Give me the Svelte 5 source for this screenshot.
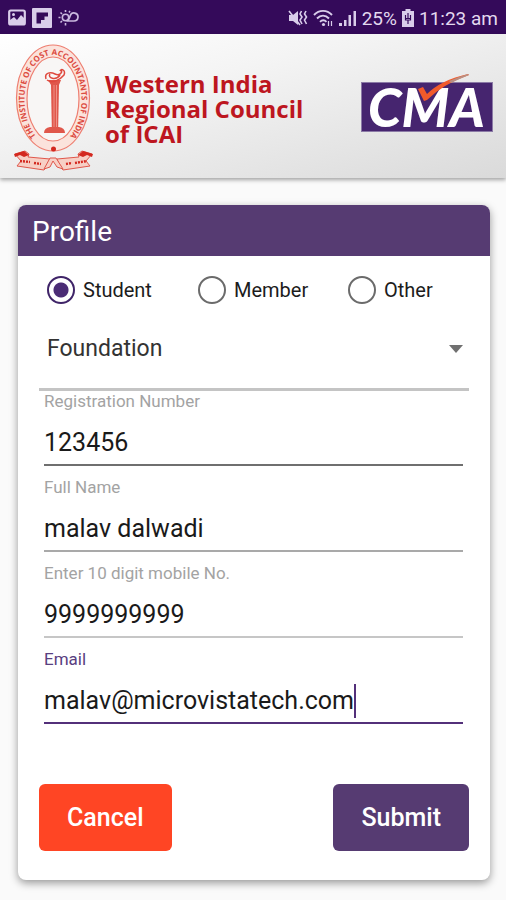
<script>
  let role = $state('Student');
  let level = $state('Foundation');
  const roles = ['Student', 'Member', 'Other'];
  const levels = ['Foundation', 'Intermediate', 'Final'];

  let fields = $state([
    { id: 'reg', label: 'Registration Number', type: 'text', value: '123456', tone: 'dark' },
    { id: 'name', label: 'Full Name', type: 'text', value: 'malav dalwadi', tone: 'mid' },
    { id: 'mobile', label: 'Enter 10 digit mobile No.', type: 'tel', value: '9999999999', tone: 'light' },
    { id: 'email', label: 'Email', type: 'text', value: 'malav@microvistatech.com', tone: 'active' }
  ]);
</script>

<div class="screen">
  <div class="status">
    <div class="group left">
      <svg width="18" height="18" viewBox="0 0 18 18" aria-hidden="true">
        <rect x="1.2" y="1.5" width="15.6" height="14" rx="1.5" fill="none" stroke="#d9cdea" stroke-width="2.2" />
        <path d="M2 13V11l4-3 3 3 4-5 4 4v5H2z" fill="#d9cdea" />
        <circle cx="5.5" cy="5.5" r="1.5" fill="#d9cdea" />
      </svg>
      <svg width="20" height="20" viewBox="0 0 20 20" aria-hidden="true">
        <rect width="20" height="20" rx="1" fill="#d9cdea" />
        <path d="M4.5 4.500H16V8.500H12.500V12H9V15.500H4.500z" fill="#340a5a" />
      </svg>
      <svg width="21" height="18" viewBox="0 0 21 18" fill="none" stroke="#c9b9de" aria-hidden="true">
        <circle cx="7.500" cy="8.500" r="3.200" stroke-width="1.600" />
        <path d="M7.500 1v2M2.500 3.500l1.500 1.500M.5 8.500h2M2.500 13.500L4 12M7.500 14v2.500M11 3.500l1-1.500" stroke-width="1.600" />
        <path d="M8.500 12h7.500a4 4 0 1 0-3.800-5.300C11.500 9 10 11.800 8.500 12z" stroke-width="1.700" />
      </svg>
    </div>
    <div class="group right">
      <svg width="20" height="18" viewBox="0 0 20 18" aria-hidden="true">
        <path d="M1 6h4l5-4v14l-5-4H1z" fill="#d9cdea" />
        <path d="M1 2l11 14" stroke="#d9cdea" stroke-width="1.600" />
        <path d="M13.500 2l-1.500 3 2 3-2 3 2 4M18 2l-1.500 3 2 3-2 3 2 4" fill="none" stroke="#d9cdea" stroke-width="1.600" />
      </svg>
      <svg width="21" height="18" viewBox="0 0 21 18" fill="none" stroke="#d9cdea" stroke-width="1.900" aria-hidden="true">
        <path d="M1 6C6 .5 14 .5 19 6M4 9.500c3.500-3.800 8.500-3.800 12 0M7 12.800c2-2 4.500-2 6.500 0" />
        <circle cx="10.500" cy="15.500" r="1.600" fill="#d9cdea" stroke="none" />
        <path d="M15.500 12v5M18.500 12v5" stroke-width="1.200" />
      </svg>
      <svg width="18" height="18" viewBox="0 0 18 18" fill="#d9cdea" aria-hidden="true">
        <path d="M0 14h3v3H0zM5 11h2.500v6H5zM9.500 6H12v11H9.500zM14.500 2H17v15h-2.500z" />
      </svg>
      <span>25%</span>
      <svg width="12" height="18" viewBox="0 0 12 18" aria-hidden="true">
        <path d="M3.500 0h5v2H12v16H0V2h3.500z" fill="#d9cdea" />
        <path d="M6 4v5M3 9.500h6M3.500 6v5h5V6M6 11v4" fill="none" stroke="#340a5a" stroke-width="1.200" />
      </svg>
      <span>11:23 am</span>
    </div>
  </div>

  <header>
    <svg class="seal" width="86" height="132" viewBox="11 43 86 132" role="img" aria-label="Institute seal">
      <ellipse cx="53" cy="99" rx="36.500" ry="53" fill="#fbe3dc" stroke="#ee7e70" stroke-width="1.200" />
      <ellipse cx="53" cy="100" rx="26" ry="42" fill="#f8f6f5" stroke="#ee7e70" stroke-width="1.200" />
      <path id="ring" d="M36 137A28.500 45 0 1 1 70 137" fill="none" />
      <text class="ringtext"><textPath href="#ring" startOffset="50%" text-anchor="middle">THE INSTITUTE OF COST ACCOUNTANTS OF INDIA</textPath></text>
      <g fill="#e0574b">
        <path d="M51 86h8l-.8 42h-6.400z" />
        <path d="M44 134q0-5 6-6h9q6 1 6 6z" />
        <path d="M48 81h13l-2 5h-8z" />
        <circle cx="53.500" cy="150" r="2.500" fill="#d3281f" />
      </g>
      <path d="M54 86v42M56.500 86v42" stroke="#f2a095" stroke-width=".8" />
      <path d="M46 80c-2-7 5-7 9-5s8-1 6-4M47 81c5 4 13 0 17-5 2-5-3-7-4-4M50 75c-3 4 6 7 10 1" fill="none" stroke="#df493e" stroke-width="1.500" />
      <g fill="#f7cfc5" stroke="#e0574b" stroke-width="1">
        <path d="M15 155l10-3 4 3-1 3 22 2-3 7-3 4-27-4 4-5z" />
        <path d="M92 155l-10-3-4 3 1 3-22 2 3 7 3 4 27-4-4-5z" />
        <path d="M50 159l-6 11 6-2 3-6 4 6 6 2-7-11z" />
      </g>
      <path d="M14 155l10-3 5 4-5 2-4-2-5 2zM93 155l-10-3-5 4 5 2 4-2 5 2z" fill="#d3281f" />
      <path d="M20 162l10 1M34 164l7 1M66 165l6-1M75 164l12-2" stroke="#d3281f" stroke-width="2.400" stroke-dasharray="2 1" />
    </svg>
    <h1>Western India<br />Regional Council<br />of ICAI</h1>
    <svg class="cma" width="132" height="62" viewBox="0 0 132 62" role="img" aria-label="CMA">
      <rect x=".5" y="9.500" width="131" height="49" fill="#46256f" stroke="#8b7aa6" />
      <text x="7" y="54">CMA</text>
      <path d="M57 16l5-2 4 7Q80 7 107 1l1 1Q82 11 66 27l-3 1z" fill="#f15a2b" />
      <path d="M88 8q9-4 19-7l1 1q-10 4-18 8z" fill="#b98f83" />
    </svg>
  </header>

  <main>
    <form class="card" onsubmit={(e) => e.preventDefault()}>
      <h2>Profile</h2>
      <div class="body">
        <div class="roles" role="radiogroup" aria-label="Profile type">
          {#each roles as r}
            <label><input type="radio" name="role" value={r} bind:group={role} />{r}</label>
          {/each}
        </div>
        <div class="picker">
          <select aria-label="Level" bind:value={level}>
            {#each levels as l}<option>{l}</option>{/each}
          </select>
          <svg width="14" height="8" viewBox="0 0 14 8" aria-hidden="true"><path d="M0 0h14L7 8z" fill="#707070" /></svg>
        </div>
        <div class="fields">
          {#each fields as f}
            <div class="field {f.tone}">
              <label for={f.id}>{f.label}</label>
              <div class="line">
                <input id={f.id} type={f.type} bind:value={f.value} />
                {#if f.tone === 'active'}<span class="caret"></span>{/if}
              </div>
            </div>
          {/each}
        </div>
        <div class="actions">
          <button type="button" class="cancel">Cancel</button>
          <button type="submit" class="submit">Submit</button>
        </div>
      </div>
    </form>
  </main>
</div>

<style>
  :global(body) { margin: 0; background: #fafafa; }
  .screen { min-height: 100vh; background: #fafafa; font-family: Roboto, "Noto Sans", sans-serif; color: #1c1c1c; }
  .screen * { box-sizing: border-box; }
  .status { height: 34px; padding: 2px 8px 0; display: flex; justify-content: space-between; align-items: center; background: #340a5a; color: #e3d9ef; font-size: 19px; }
  .group { display: flex; align-items: center; }
  .left { gap: 6px; }
  .right { gap: 5px; }
  header { height: 144px; padding: 4px 13px 0 11px; display: flex; align-items: center; background: linear-gradient(165deg, #fff 0%, #f4f4f4 35%, #dadada 100%); box-shadow: 0 2px 4px rgba(0, 0, 0, .35); }
  .seal { flex: none; }
  .ringtext { font: 700 8px "Open Sans", sans-serif; fill: #dc4a40; }
  h1 { margin: 0 0 0 8px; flex: 1; font: 700 24px/25px "Open Sans", "Noto Sans", sans-serif; color: #bd1620; white-space: nowrap; }
  .cma { flex: none; margin-bottom: 8px; overflow: visible; }
  .cma text { font: italic 900 54px Lato, sans-serif; fill: #fff; }
  main { padding: 27px 16px 20px 18px; }
  .card { background: #fff; border-radius: 8px; box-shadow: 0 3px 8px rgba(0, 0, 0, .4); }
  h2 { margin: 0; height: 51px; padding: 0 14px; background: #563b72; color: #fff; border-radius: 8px 8px 0 0; font-size: 28px; line-height: 54px; font-weight: 400; }
  .body { padding: 20px 21px 29px; }
  .roles { display: grid; grid-template-columns: 151px 150px 1fr; padding-left: 8px; }
  .roles label { display: flex; align-items: center; gap: 8px; font-size: 20px; line-height: 28px; }
  .roles input { appearance: none; width: 28px; height: 28px; margin: 0; border: 2px solid #6b6b6b; border-radius: 50%; }
  .roles input:checked { border-color: #3f2468; background: radial-gradient(circle, #4b2c75 7px, transparent 8px); }
  .picker { display: flex; align-items: center; height: 87px; border-bottom: 3px solid #c4c4c4; position: relative; }
  select { appearance: none; width: 100%; height: 84px; padding: 6px 32px 0 8px; border: 0; background: none; font: 400 23px/28px Roboto, sans-serif; color: #333; }
  .picker svg { position: absolute; right: 6px; top: 41px; pointer-events: none; }
  .fields { display: grid; gap: 11px; padding: 0 6px 0 5px; }
  .field label { display: block; font-size: 17px; line-height: 20px; color: #a3a3a3; }
  .line { display: flex; align-items: center; height: 55px; padding-top: 10px; border-bottom: 2px solid #6f6f6f; }
  .line input { width: 100%; height: 40px; padding: 0; border: 0; outline: 0; background: none; font: 400 25px/32px Roboto, sans-serif; color: #1a1a1a; }
  .mid .line { border-color: #a9a9a9; }
  .light .line { border-color: #c6c6c6; }
  .active .line { border-color: #53307a; }
  .active label { color: #594080; }
  .active input { width: auto; field-sizing: content; }
  .caret { flex: none; width: 2px; height: 34px; background: #53307a; }
  .actions { display: flex; justify-content: space-between; margin-top: 60px; }
  button { height: 67px; padding: 0 28px; border: 0; border-radius: 6px; color: #fff; font: 500 25px/32px Roboto, sans-serif; }
  .cancel { background: #ff4524; }
  .submit { background: #563b72; }
</style>
